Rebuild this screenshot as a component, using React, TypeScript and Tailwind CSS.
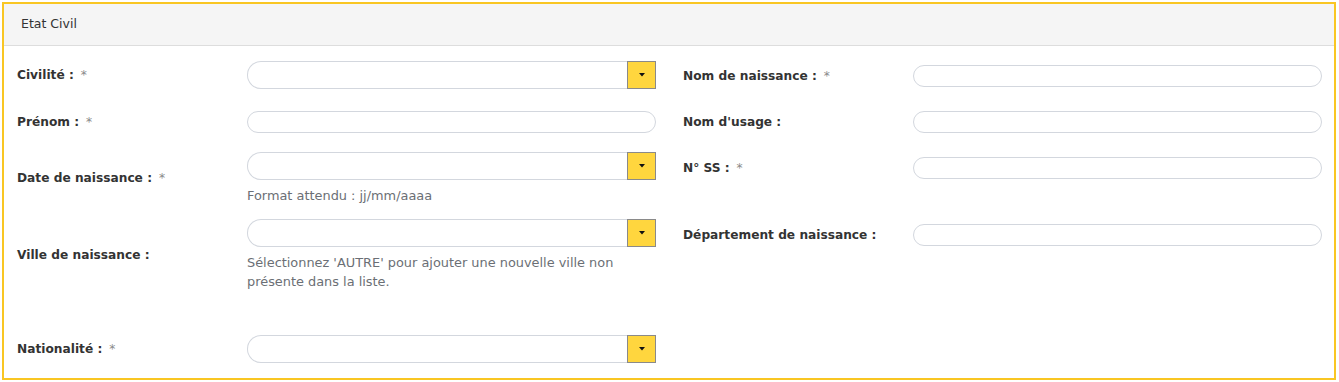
import React from "react"

const font = { fontFamily: '"DejaVu Sans", Verdana, sans-serif' }

function Label({ text, required }: { text: string; required?: boolean }) {
  return (
    <div className="w-[230px] shrink-0 text-[12.2px] font-bold text-[#333333]">
      {text}
      {required && <span className="ml-[3px] font-normal text-[#8a8a8a]"> *</span>}
    </div>
  )
}

function TextInput() {
  return <div className="h-[22px] w-full rounded-full border border-[#d3d7de] bg-white" />
}

function SelectInput() {
  return (
    <div className="flex h-[28px] w-full">
      <div className="flex-1 rounded-l-full border border-r-0 border-[#d3d7de] bg-white" />
      <div className="flex w-[29px] items-center justify-center border border-[#8a8a8a] bg-[#ffd63e]">
        <svg width="6" height="4" viewBox="0 0 6 4">
          <path d="M0 0 L6 0 L3 3.5 Z" fill="#111" />
        </svg>
      </div>
    </div>
  )
}

function Help({ children }: { children: React.ReactNode }) {
  return <p className="mt-[6px] text-[12.9px] leading-[19px] text-[#6b6f75]">{children}</p>
}

export default function App() {
  return (
    <div className="bg-white p-[2px]" style={font}>
      <div className="h-[378px] w-[1334px] border-2 border-[#f9c623] bg-white">
        <div className="flex h-[42px] items-center border-b border-[#dddddd] bg-[#f5f5f5] px-[17px] text-[12.5px] text-[#333333]">
          Etat Civil
        </div>
        <div className="grid grid-cols-[639px_639px] gap-x-[27px] px-[13px] pt-[15px]">
          {/* left column */}
          <div className="flex flex-col">
            <div className="flex items-center">
              <Label text="Civilité :" required />
              <SelectInput />
            </div>
            <div className="mt-[22px] flex items-center">
              <Label text="Prénom :" required />
              <TextInput />
            </div>
            <div className="mt-[19px] flex items-center">
              <Label text="Date de naissance :" required />
              <div className="flex-1">
                <SelectInput />
                <Help>Format attendu : jj/mm/aaaa</Help>
              </div>
            </div>
            <div className="mt-[14px] flex items-center">
              <Label text="Ville de naissance :" />
              <div className="flex-1">
                <SelectInput />
                <Help>
                  Sélectionnez 'AUTRE' pour ajouter une nouvelle ville non
                  <br />
                  présente dans la liste.
                </Help>
              </div>
            </div>
            <div className="mt-[44px] flex items-center">
              <Label text="Nationalité :" required />
              <SelectInput />
            </div>
          </div>

          {/* right column */}
          <div className="flex flex-col pt-[4px]">
            <div className="flex items-center">
              <Label text="Nom de naissance :" required />
              <TextInput />
            </div>
            <div className="mt-[24px] flex items-center">
              <Label text="Nom d'usage :" />
              <TextInput />
            </div>
            <div className="mt-[24px] flex items-center">
              <Label text="N° SS :" required />
              <TextInput />
            </div>
            <div className="mt-[45px] flex items-center">
              <Label text="Département de naissance :" />
              <TextInput />
            </div>
          </div>
        </div>
      </div>
    </div>
  )
}
